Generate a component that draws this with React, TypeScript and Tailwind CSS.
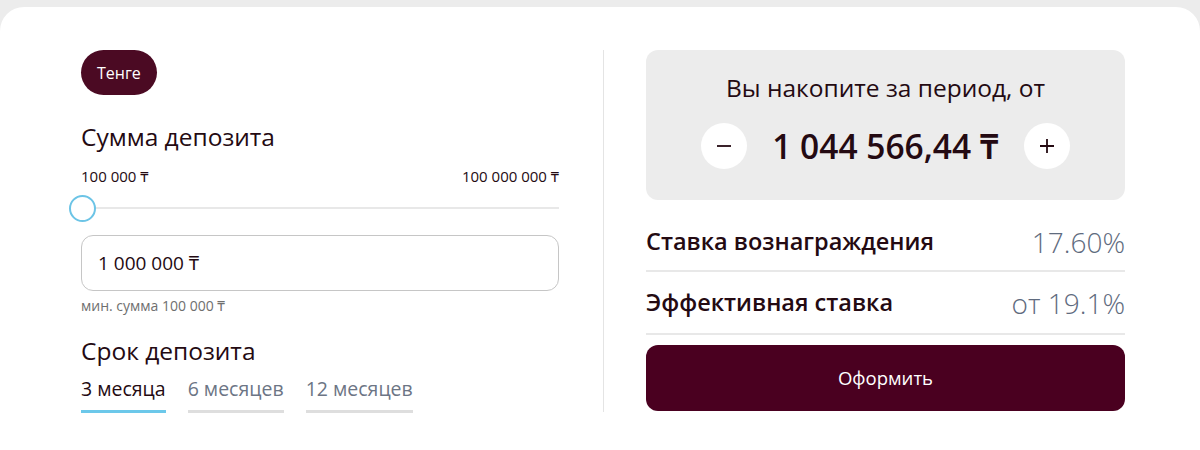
import React from "react";

const dark = "text-[#240a12]";

export default function App() {
  return (
    <div
      className="w-[1200px] h-[450px] bg-[#ececec] pt-[7px] overflow-hidden"
      style={{ fontFamily: '"Open Sans", "Noto Sans", sans-serif' }}
    >
      <div className="w-[1200px] h-[443px] bg-white rounded-tl-[24px] rounded-tr-[24px] flex pl-[81px] pt-[43px]">
        {/* Left column */}
        <div className="w-[478px] flex flex-col">
          <div className="flex">
            <div className="h-[45px] px-[16px] rounded-full bg-[#4b0a23] text-white text-[16px] flex items-center">
              Тенге
            </div>
          </div>
          <div className={`mt-[26px] text-[24.5px] leading-[32px] font-medium ${dark}`}>Сумма депозита</div>
          <div className={`mt-[13px] flex justify-between text-[15px] leading-[20px] ${dark}`}>
            <span>100 000 ₸</span>
            <span>100 000 000 ₸</span>
          </div>
          <div className="relative mt-[7px] h-[30px] flex items-center">
            <div className="w-full h-[2px] bg-[#e8e8e8]" />
            <div className="absolute left-[-12px] top-[2px] w-[27px] h-[27px] rounded-full border-2 border-[#6cc4e6] bg-white" />
          </div>
          <div className="mt-[12px] h-[56px] rounded-[12px] border border-[#c6c6c6] flex items-center px-[16px]">
            <span className={`text-[19px] ${dark}`}>1 000 000 ₸</span>
          </div>
          <div className="mt-[5px] text-[14px] leading-[20px] text-[#6f6f6f]">мин. сумма 100 000 ₸</div>
          <div className={`mt-[19px] text-[24.5px] leading-[32px] font-medium ${dark}`}>Срок депозита</div>
          <div className="mt-[9px] flex gap-[22px] text-[19.5px] leading-[26px]">
            <div className="flex flex-col">
              <span className={dark}>3 месяца</span>
              <div className="mt-[8px] h-[3px] bg-[#6cc8ea]" />
            </div>
            <div className="flex flex-col">
              <span className="text-[#6c7585]">6 месяцев</span>
              <div className="mt-[8px] h-[3px] bg-[#dedede]" />
            </div>
            <div className="flex flex-col">
              <span className="text-[#6c7585]">12 месяцев</span>
              <div className="mt-[8px] h-[3px] bg-[#dedede]" />
            </div>
          </div>
        </div>

        {/* Divider */}
        <div className="ml-[44px] w-[1px] h-[362px] bg-[#e4e4e4]" />

        {/* Right column */}
        <div className="ml-[42px] w-[479px] flex flex-col">
          <div className="h-[150px] rounded-[12px] bg-[#ececec] flex flex-col items-center pt-[22px]">
            <div className={`text-[24.5px] leading-[32px] font-medium ${dark}`}>Вы накопите за период, от</div>
            <div className="mt-[19px] flex items-center gap-[25px]">
              <div className="w-[46px] h-[46px] rounded-full bg-white flex items-center justify-center">
                <svg width="18" height="18" viewBox="0 0 18 18">
                  <path d="M2 9h14" stroke="#240a12" strokeWidth="1.8" />
                </svg>
              </div>
              <div className={`text-[33.5px] leading-[44px] font-semibold ${dark}`}>1 044 566,44 ₸</div>
              <div className="w-[46px] h-[46px] rounded-full bg-white flex items-center justify-center">
                <svg width="18" height="18" viewBox="0 0 18 18">
                  <path d="M2 9h14M9 2v14" stroke="#240a12" strokeWidth="1.8" />
                </svg>
              </div>
            </div>
          </div>
          <div className="mt-[21px] h-[51px] flex items-center justify-between border-b-2 border-[#e8e8e8] pb-[8px]">
            <span className={`text-[23.5px] font-semibold ${dark}`}>Ставка вознаграждения</span>
            <span className="text-[28px] font-light text-[#5f6b7e]">17.60%</span>
          </div>
          <div className="h-[63px] flex items-center justify-between border-b-2 border-[#e8e8e8] pt-[1px]">
            <span className={`text-[23.5px] font-semibold ${dark}`}>Эффективная ставка</span>
            <span className="text-[28px] font-light text-[#5f6b7e]">от 19.1%</span>
          </div>
          <div className="mt-[10px] h-[66px] rounded-[12px] bg-[#4a0020] flex items-center justify-center text-white text-[18.5px]">
            Оформить
          </div>
        </div>
      </div>
    </div>
  );
}
